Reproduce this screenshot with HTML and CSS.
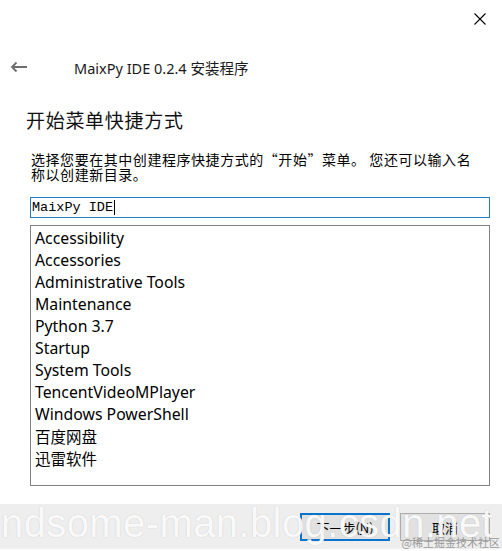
FILE: index.html
```html
<!DOCTYPE html>
<html lang="zh-CN">
<head>
<meta charset="utf-8">
<title>MaixPy IDE 0.2.4 安装程序</title>
<link rel="stylesheet" href="styles.css">
</head>
<body>
<div class="window">
  <div class="titlebar">
    <svg class="close" width="14" height="14" viewBox="0 0 14 14"><path d="M1.5 1.5 L12.5 12.5 M12.5 1.5 L1.5 12.5" stroke="#000" stroke-width="1.1" fill="none"/></svg>
  </div>
  <div class="header">
    <svg class="back" width="18" height="12" viewBox="0 0 18 12"><path d="M17 6 H2 M6.5 1.5 L2 6 L6.5 10.5" stroke="#6e6e6e" stroke-width="1.8" fill="none"/></svg>
    <span class="app-title">MaixPy IDE 0.2.4 安装程序</span>
  </div>
  <h1 class="heading">开始菜单快捷方式</h1>
  <p class="desc">选择您要在其中创建程序快捷方式的“开始”菜单。 您还可以输入名<br>称以创建新目录。</p>
  <div class="input"><span class="input-text">MaixPy IDE</span><span class="caret"></span></div>
  <ul class="list">
    <li>Accessibility</li>
    <li>Accessories</li>
    <li>Administrative Tools</li>
    <li>Maintenance</li>
    <li>Python 3.7</li>
    <li>Startup</li>
    <li>System Tools</li>
    <li>TencentVideoMPlayer</li>
    <li>Windows PowerShell</li>
    <li class="cjk">百度网盘</li>
    <li class="cjk">迅雷软件</li>
  </ul>
  <div class="footer">
    <button class="btn btn-primary">下一步(<u>N</u>)</button>
    <button class="btn">取消</button>
  </div>
  <div class="watermark">ndsome-man.blog.csdn.net</div>
  <div class="stamp">@稀土掘金技术社区</div>
</div>
</body>
</html>
```
FILE: styles.css
```css
html, body {
  margin: 0;
  padding: 0;
  background: #ffffff;
}
body {
  width: 502px;
  height: 551px;
  overflow: hidden;
  font-family: "Noto Sans", "Noto Sans CJK SC", sans-serif;
  color: #000;
}
.window {
  position: relative;
  width: 502px;
  height: 551px;
  display: flex;
  flex-direction: column;
}
.titlebar {
  height: 38px;
  display: flex;
  justify-content: flex-end;
  align-items: flex-start;
  padding-right: 15px;
  box-sizing: border-box;
}
.close {
  margin-top: 12px;
}
.header {
  height: 20px;
  margin-top: 20px;
  display: flex;
  align-items: center;
}
.back {
  margin-left: 10px;
  margin-top: -3px;
}
.app-title {
  margin-left: 46px;
  font-family: "Noto Sans", "Noto Sans CJK SC", sans-serif;
  font-size: 14.5px;
  line-height: 20px;
  color: #1a1a1a;
}
.heading {
  margin: 31px 0 0 26px;
  height: 22px;
  font-family: "Noto Sans CJK SC", sans-serif;
  font-weight: 400;
  font-size: 19px;
  line-height: 22px;
  color: #111;
  letter-spacing: 0.7px;
}
.desc {
  margin: 21px 0 0 31px;
  font-family: "Noto Sans CJK SC", sans-serif;
  font-size: 14px;
  line-height: 15px;
  letter-spacing: 0.55px;
  color: #000;
}
.input {
  margin: 15px 0 0 30px;
  width: 460px;
  height: 21px;
  box-sizing: border-box;
  border: 1px solid #1b7fc0;
  display: flex;
  align-items: center;
  padding-left: 1px;
}
.input-text {
  font-family: "Liberation Mono", "DejaVu Sans Mono", monospace;
  font-size: 13.5px;
  line-height: 19px;
  white-space: pre;
}
.caret {
  width: 1px;
  height: 15px;
  background: #000;
  margin-left: 1px;
}
.list {
  list-style: none;
  margin: 7px 0 0 30px;
  padding: 1px 0 0 4px;
  width: 460px;
  height: 261px;
  box-sizing: border-box;
  border: 1px solid #828282;
}
.list li {
  font-family: "Noto Sans", "Noto Sans CJK SC", sans-serif;
  font-size: 15.8px;
  line-height: 22px;
  height: 22px;
  color: #000;
}
.list li.cjk {
  font-family: "Noto Sans CJK SC", sans-serif;
  font-size: 15.5px;
}
.footer {
  margin-top: 18px;
  height: 45px;
  background: #eeeeee;
  display: flex;
  justify-content: flex-end;
  align-items: flex-start;
  gap: 10px;
  padding: 9px 12px 0 0;
  box-sizing: border-box;
}
.btn {
  width: 90px;
  height: 28px;
  box-sizing: border-box;
  border: 1px solid #adadad;
  background: #e1e1e1;
  font-family: "Noto Sans CJK SC", sans-serif;
  font-size: 13px;
  color: #000;
  padding: 0;
}
.btn-primary {
  border: 2px solid #0a73cc;
}
.watermark {
  position: absolute;
  left: 1px;
  top: 503px;
  font-family: "Liberation Sans", sans-serif;
  font-size: 40px;
  line-height: 40px;
  letter-spacing: 0.4px;
  color: rgba(255, 255, 255, 0.92);
  text-shadow: 0 0 1px rgba(150, 150, 150, 0.5);
  white-space: nowrap;
  pointer-events: none;
}
.stamp {
  position: absolute;
  right: 2px;
  bottom: 3px;
  font-family: "Noto Sans CJK SC", sans-serif;
  font-size: 11px;
  line-height: 12px;
  color: #9a9a9a;
  pointer-events: none;
}
```
